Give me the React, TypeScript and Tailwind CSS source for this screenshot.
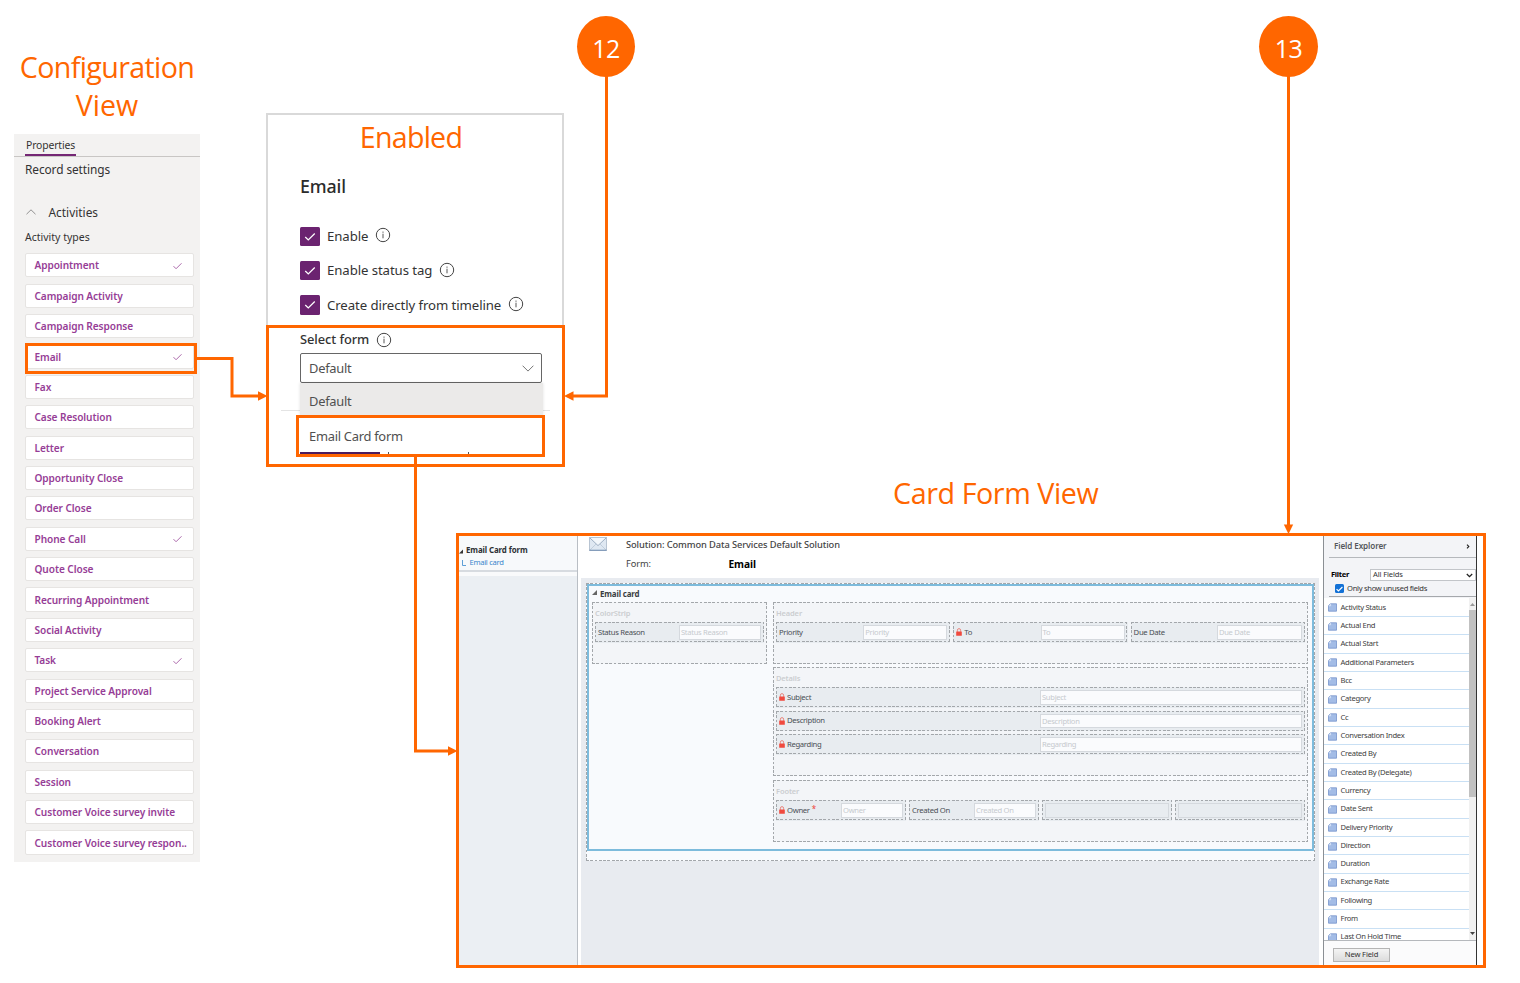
import type { ReactNode } from "react";

const activities: { name: string; checked?: boolean }[] = [
  { name: "Appointment", checked: true },
  { name: "Campaign Activity" },
  { name: "Campaign Response" },
  { name: "Email", checked: true },
  { name: "Fax" },
  { name: "Case Resolution" },
  { name: "Letter" },
  { name: "Opportunity Close" },
  { name: "Order Close" },
  { name: "Phone Call", checked: true },
  { name: "Quote Close" },
  { name: "Recurring Appointment" },
  { name: "Social Activity" },
  { name: "Task", checked: true },
  { name: "Project Service Approval" },
  { name: "Booking Alert" },
  { name: "Conversation" },
  { name: "Session" },
  { name: "Customer Voice survey invite" },
  { name: "Customer Voice survey respon.." },
];

const fields = [
  "Activity Status", "Actual End", "Actual Start", "Additional Parameters", "Bcc", "Category", "Cc",
  "Conversation Index", "Created By", "Created By (Delegate)", "Currency", "Date Sent", "Delivery Priority",
  "Direction", "Duration", "Exchange Rate", "Following", "From", "Last On Hold Time",
];

const dashed =
  "bg-no-repeat [background-image:repeating-linear-gradient(90deg,#a3a7ab_0_2.7px,transparent_2.7px_4.3px),repeating-linear-gradient(90deg,#a3a7ab_0_2.7px,transparent_2.7px_4.3px),repeating-linear-gradient(180deg,#a3a7ab_0_2.7px,transparent_2.7px_4.3px),repeating-linear-gradient(180deg,#a3a7ab_0_2.7px,transparent_2.7px_4.3px)] [background-size:100%_1.4px,100%_1.4px,1.4px_100%,1.4px_100%] [background-position:top,bottom,left,right]";

function Check({ className }: { className: string }) {
  return (
    <svg viewBox="0 0 12 10" className={className} fill="none" stroke="currentColor">
      <path d="M1 5.2 4.2 8.4 11 1.6" />
    </svg>
  );
}

function Info() {
  return (
    <svg viewBox="0 0 16 16" className="size-[16px] shrink-0 text-[#444]" fill="none" stroke="currentColor">
      <circle cx="8" cy="8" r="6.7" strokeWidth="1" />
      <path d="M8 6.7V11.3" strokeWidth="0.9" />
      <path d="M8 4.6V5.7" strokeWidth="1" />
    </svg>
  );
}

function Lock() {
  return (
    <svg viewBox="0 0 6 8" className="mr-[2px] h-[8px] w-[6px] shrink-0">
      <path d="M1.4 3.8V2.2a1.6 1.6 0 0 1 3.2 0V3.8" fill="none" stroke="#e9877f" strokeWidth="1" />
      <rect x="0.2" y="3.4" width="5.6" height="4.4" rx="0.4" fill="#f04a3e" />
    </svg>
  );
}

function ConfigurationView() {
  return (
    <aside className="absolute left-[14px] top-[48px] w-[186px]">
      <h2 className="text-center font-['Open_Sans'] text-[28.6px] leading-[38px] text-[#ff6600]">
        <span className="tracking-[-0.62px]">Configuration</span>
        <br />
        View
      </h2>
      <div className="mt-[10px] h-[728px] bg-[#f3f2f1] text-[#333]">
        <div className="flex h-[23px] items-end border-b border-[#c8c6c4] pl-[11px]">
          <div className="h-[22px] w-[51px] border-b-2 border-[#742774] pl-px text-[10.4px] leading-[22px] tracking-[-0.15px]">Properties</div>
        </div>
        <div className="pl-[11px] text-[11.9px] leading-[24px] tracking-[-0.1px]">Record settings</div>
        <div className="mt-[20px] flex h-[22px] items-center pl-[12px] text-[11.9px]">
          <svg viewBox="0 0 10 6" className="h-[6px] w-[10px]" fill="none" stroke="#777" strokeWidth="0.8">
            <path d="M0.5 5.2 5 0.8 9.5 5.2" />
          </svg>
          <span className="ml-[12.5px] pt-px">Activities</span>
        </div>
        <div className="mt-[3px] h-[22px] pl-[11px] text-[10.5px] leading-[22px]">Activity types</div>
        <ul className="mt-[5.3px] flex flex-col gap-[6.3px] pl-[10.5px]">
          {activities.map((a) => (
            <li
              key={a.name}
              className="flex h-[24.08px] w-[169px] items-center justify-between rounded-[2px] border border-[#e6e4e2] bg-white pl-[9px] pr-[10px] text-[10.1px] font-semibold text-[#963d96]"
            >
              <span className="whitespace-nowrap pt-[1.4px] tracking-[-0.07px]">{a.name}</span>
              {a.checked && <Check className="mt-px h-[8px] w-[11px] text-[#a055a0] stroke-[1.1]" />}
            </li>
          ))}
        </ul>
      </div>
    </aside>
  );
}

function Option({ children }: { children: ReactNode }) {
  return (
    <div className="flex h-[34.3px] items-center">
      <div className="grid h-[19.5px] w-[19.5px] place-items-center rounded-[1.5px] bg-[#6b2370]">
        <Check className="h-[9.5px] w-[12px] text-white stroke-[1.3]" />
      </div>
      <span className="ml-[7.5px] mr-[7px] pt-px">{children}</span>
      <div className="-mt-[2px]">
        <Info />
      </div>
    </div>
  );
}

function EnabledPanel() {
  return (
    <section className="absolute left-[266px] top-[113px] h-[353px] w-[298px] border-2 border-[#d9d9d9] bg-white px-[32px] text-[13.2px] tracking-[-0.08px] text-[#333]">
      <h2 className="pr-[8px] pt-[3px] text-center font-['Open_Sans'] text-[28.6px] leading-[38px] tracking-[-0.75px] text-[#ff6600]">Enabled</h2>
      <h3 className="mt-[17px] text-[17.8px] font-medium leading-[26px] tracking-[-0.1px] text-[#2b2b2b]">Email</h3>
      <div className="mt-[20.3px]">
        <Option>Enable</Option>
        <Option>Enable status tag</Option>
        <Option>Create directly from timeline</Option>
      </div>
      <div className="flex h-[31.5px] items-center gap-[7px] pt-[4px] text-[12.9px] font-medium">
        Select form <Info />
      </div>
      <div className="-mt-[0.6px] text-[12.9px] tracking-[-0.27px] text-[#505050]">
        <div className="flex h-[30px] w-[242px] items-center justify-between rounded-[2px] border border-[#666] pl-[8px] pr-[7px]">
          <span className="pt-[2px]">Default</span>
          <svg viewBox="0 0 12 7" className="h-[7px] w-[12px]" fill="none" stroke="#666" strokeWidth="0.9">
            <path d="M0.6 0.7 6 6.1 11.4 0.7" />
          </svg>
        </div>
        <div className="-mx-[19px] h-[32px] w-[269px] bg-[linear-gradient(#e4e4e4,#e4e4e4)] bg-[length:100%_1px] bg-[position:0_27px] bg-no-repeat px-[19px]">
          <div className="h-full w-[243px] bg-[#ebeae9] pl-[9px] pt-px leading-[35px] shadow-[0_0_3px_rgba(0,0,0,0.12)]">Default</div>
        </div>
        <div className="relative -ml-[4px] h-[42px] w-[249px] border-[3px] border-[#ff6600] bg-white pl-[10px] leading-[37px]">
          Email Card form
          <div className="absolute bottom-0 left-[1px] flex h-[2px] w-[240px] items-end gap-[8px]">
            <i className="h-[2px] w-[80px] bg-[#4b1a5c]" />
            <i className="h-[2px] flex-1 border-l border-[#555]" />
            <i className="h-[2px] w-[72px] border-l border-[#555]" />
          </div>
        </div>
      </div>
    </section>
  );
}

function FieldInput({ className, children }: { className: string; children?: ReactNode }) {
  return (
    <div
      className={
        "h-[14.5px] shrink-0 overflow-hidden whitespace-nowrap border border-[#d5d9de] pl-[1px] text-[7.6px] leading-[12px] tracking-[-0.3px] text-[#c6cace] " + className
      }
    >
      {children}
    </div>
  );
}

function Cell({ label, input, className, locked, required }: { label: string; input: string; className: string; locked?: boolean; required?: boolean }) {
  return (
    <div className={"flex h-[20.5px] items-center bg-[#e8ecf0] pl-[3px] pr-[3px] " + dashed + " " + className}>
      {locked && <Lock />}
      <span className="pt-px text-[7.7px] tracking-[-0.33px] text-[#4a4f55]">{label}</span>
      {required && <span className="-mt-[2px] ml-[2px] text-[8px] leading-none text-[#ee4338]">*</span>}
      <FieldInput className={"ml-auto bg-[#fafbfd] " + input}>{label}</FieldInput>
    </div>
  );
}

function Section({ title, className, children }: { title: string; className: string; children: ReactNode }) {
  return (
    <div className={"bg-[#f3f5f8] pl-[3px] pt-[5px] " + dashed + " " + className}>
      <div className="h-[15px] text-[7.5px] font-semibold leading-[13px] tracking-[-0.13px] text-[#cbcdd0]">{title}</div>
      {children}
    </div>
  );
}

function FormCanvas() {
  return (
    <div className="flex h-full w-[744px] flex-col border-l border-[#b9bec4] bg-white pl-[3px]">
      <header className="flex h-[42px]">
        <svg viewBox="0 0 18 14" className="ml-[8px] mt-[1px] h-[14px] w-[18px]">
          <rect x="0.5" y="0.5" width="17" height="13" fill="#dfe8f2" stroke="#b8c4d2" />
          <path d="M1 13 7 7M17 13 11 7" stroke="#b9c6d5" strokeWidth="0.8" />
          <path d="M1 1 9 8.6 17 1" fill="#f3f7fb" stroke="#9fb0c4" strokeWidth="1" />
          <path d="M0.5 13.3h17" stroke="#7f99b8" strokeWidth="1.2" />
        </svg>
        <div className="ml-[19px] text-[9.3px] leading-[18.5px] tracking-[-0.1px] text-[#444]">
          <div className="font-medium">Solution: Common Data Services Default Solution</div>
          <div className="flex">
            <span className="w-[102.5px]">Form:</span>
            <b className="text-[10.2px] text-black">Email</b>
          </div>
        </div>
      </header>
      <div className="mr-[2px] flex-1 bg-[#e8ebf0] pl-[5px] pt-[5px]">
        <div className={"h-[278px] w-[729px] bg-[#f8fafd] px-px pt-px " + dashed}>
          <div className="h-[267px] border-2 border-[#7dbbdc] pl-[3px]">
            <div className="flex h-[16px] items-center pt-px text-[7.9px] font-bold tracking-[-0.13px] text-[#3a3d41]">
              <svg viewBox="0 0 5 5" className="-mt-[5px] mr-[3px] size-[5px]">
                <path d="M5 0V5H0Z" fill="#666" />
              </svg>
              Email card
            </div>
            <div className="flex gap-[6px]">
              <Section title="ColorStrip" className="h-[62px] w-[175px]">
                <Cell label="Status Reason" className="w-[169px]" input="w-[82px]" />
              </Section>
              <div className="w-[535px]">
                <Section title="Header" className="h-[62px]">
                  <div className="flex gap-[3px]">
                    <Cell label="Priority" className="w-[174.3px]" input="w-[84px]" />
                    <Cell label="To" locked className="w-[174.3px]" input="w-[84px]" />
                    <Cell label="Due Date" className="w-[174.4px]" input="w-[85px]" />
                  </div>
                </Section>
                <Section title="Details" className="mt-[3px] h-[109px]">
                  <div className="flex flex-col gap-[3px]">
                    <Cell label="Subject" locked className="w-[529px]" input="w-[262px]" />
                    <Cell label="Description" locked className="w-[529px]" input="w-[262px]" />
                    <Cell label="Regarding" locked className="w-[529px]" input="w-[262px]" />
                  </div>
                </Section>
                <Section title="Footer" className="mt-[4px] h-[62px]">
                  <div className="flex gap-[3px]">
                    <Cell label="Owner" locked required className="w-[130px]" input="w-[62px]" />
                    <Cell label="Created On" className="w-[130px]" input="w-[62px]" />
                    <div className={"flex h-[20.5px] w-[130px] items-center bg-[#e8ecf0] px-[3px] " + dashed}>
                      <FieldInput className="w-full" />
                    </div>
                    <div className={"flex h-[20.5px] w-[130px] items-center bg-[#e8ecf0] px-[3px] " + dashed}>
                      <FieldInput className="w-full" />
                    </div>
                  </div>
                </Section>
              </div>
            </div>
          </div>
        </div>
      </div>
    </div>
  );
}

function FieldExplorer() {
  return (
    <div className="flex h-full w-[154px] flex-col border-l border-r border-l-[#8b8f94] border-r-[#333] bg-[#f3f4f7] text-[7.6px] tracking-[-0.3px] text-[#333]">
      <div className="ml-[5px] flex h-[22px] items-center justify-between border-b border-[#b5b8bc] pl-[5px] pr-[6px] text-[8.1px] font-semibold tracking-[-0.1px] text-[#55585c]">
        Field Explorer
        <svg viewBox="0 0 4 6" className="h-[5px] w-[4px]" fill="none" stroke="#222" strokeWidth="1.3">
          <path d="M0.8 0.8 3 3 0.8 5.2" />
        </svg>
      </div>
      <div className="mt-[11px] flex h-[12px] items-center pl-[7px]">
        <b className="w-[39px] text-[7.6px] text-black">Filter</b>
        <div className="flex h-[12px] flex-1 items-center justify-between border border-[#c2c5c9] bg-white pl-[2px] pr-[2px] tracking-[-0.15px]">
          All Fields
          <svg viewBox="0 0 7 5" className="h-[5px] w-[7px]" fill="none" stroke="#222" strokeWidth="1.3">
            <path d="M0.8 1 3.5 3.7 6.2 1" />
          </svg>
        </div>
      </div>
      <div className="ml-[5px] flex h-[16px] items-center border-b border-[#a5a8ac] pl-[6px]">
        <div className="mr-[3px] grid size-[9px] place-items-center rounded-[1.5px] bg-[#1371d6]">
          <Check className="h-[6px] w-[7px] text-white stroke-[2]" />
        </div>
        Only show unused fields
      </div>
      <div className="mt-px flex h-[343px] overflow-hidden border-b border-[#b5b8bc] bg-white">
        <ul className="w-[145px] pt-[0.6px]">
          {fields.map((f) => (
            <li key={f} className="flex h-[18.33px] items-center border-b border-[#c9e0f4] pl-[4px] text-[#404040]">
              <svg viewBox="0 0 9 9" className="mr-[3.5px] mt-px size-[9px]">
                <path d="M2.4 0.8H8.5V8.2H0.5V2.7Z" fill="#a3bce6" stroke="#7694cb" strokeWidth="0.8" />
                <path d="M2.6 1V2.8H0.8" fill="none" stroke="#e3ecfa" strokeWidth="0.8" />
              </svg>
              {f}
            </li>
          ))}
        </ul>
        <div className="flex flex-1 flex-col items-center justify-between bg-[#f1f1f1] py-[5px]">
          <svg viewBox="0 0 5 3" className="h-[3px] w-[5px] shrink-0"><path d="M0 3 2.5 0 5 3Z" fill="#999" /></svg>
          <div className="mb-auto mt-[4px] h-[187px] w-[7px] bg-[#c1c1c1]" />
          <svg viewBox="0 0 5 3" className="h-[3px] w-[5px] shrink-0"><path d="M0 0 2.5 3 5 0Z" fill="#444" /></svg>
        </div>
      </div>
      <div className="flex-1 bg-[#fbfbfc] pl-[9px] pt-[7px]">
        <div className="grid h-[14px] w-[57px] place-items-center border border-[#b4b4b4] bg-gradient-to-b from-[#f4f4f4] to-[#dcdcdc] leading-none tracking-[-0.15px]">
          New Field
        </div>
      </div>
    </div>
  );
}

function CardFormView() {
  return (
    <section className="absolute left-[456px] top-[474px] w-[1030px]">
      <h2 className="h-[59px] pl-[50px] font-['Open_Sans'] text-[28.7px] leading-[38px] text-[#ff6600]">
        <span className="ml-[387px] tracking-[-0.42px]">Card Form View</span>
      </h2>
      <div className="flex h-[435px] border-[3px] border-[#ff6600] bg-white">
        <nav className="flex w-[118px] flex-col bg-[#ebeff3]">
          <div className="h-[36px] border-b-2 border-[#d7dbe0] bg-[#f7f9fb] pt-[8px]">
            <div className="flex h-[13px] items-center pt-px text-[7.9px] font-bold tracking-[-0.1px] text-[#2d3034]">
              <svg viewBox="0 0 5 5" className="mr-[3px] h-[5px] w-[4px]"><path d="M5 0V5H0Z" fill="#333" /></svg>
              Email Card form
            </div>
            <div className="flex h-[12px] items-center pl-[2.5px] text-[7.6px] tracking-[-0.3px] text-[#3a86cc]">
              <svg viewBox="0 0 4 6" className="mr-[4px] h-[6px] w-[4px]" fill="none" stroke="#4c93d1" strokeWidth="0.9"><path d="M0.5 0V5.5H4" /></svg>
              Email card
            </div>
          </div>
          <div className="h-[4px] bg-[#f9fafb]" />
        </nav>
        <FormCanvas />
        <div className="w-[2px] bg-white" />
        <FieldExplorer />
      </div>
    </section>
  );
}

function Badge({ className, children }: { className: string; children: string }) {
  return (
    <div className={"absolute top-[16px] grid h-[61px] place-items-center rounded-[50%] bg-[#ff6600] pt-[3px] font-['Open_Sans'] text-[25px] font-medium leading-none tracking-[-0.6px] text-white " + className}>
      {children}
    </div>
  );
}

export default function App() {
  return (
    <main className="relative h-[983px] w-[1520px] overflow-hidden bg-white font-['Noto_Sans',sans-serif]">
      <ConfigurationView />
      <EnabledPanel />
      <CardFormView />
      <div className="absolute left-[25px] top-[343px] h-[31px] w-[172px] border-[3px] border-[#ff6600]" />
      <div className="absolute left-[266px] top-[325px] h-[142px] w-[299px] border-[3px] border-[#ff6600]" />
      <svg viewBox="0 0 1520 983" className="absolute inset-0 h-full w-full" fill="none" stroke="#ff6600" strokeWidth="3">
        <path d="M197 358.5H232V396H260" />
        <path d="M606.5 76V396H572" />
        <path d="M415.5 457V751H450" />
        <path d="M1288.5 76V526" />
        <g fill="#ff6600" stroke="none">
          <path d="M258 391.3 267.5 396 258 400.7Z" />
          <path d="M573.5 391.3 564 396 573.5 400.7Z" />
          <path d="M448 746.3 457.5 751 448 755.7Z" />
          <path d="M1283.8 524.5H1293.2L1288.5 534Z" />
        </g>
      </svg>
      <Badge className="left-[577px] w-[58px]">12</Badge>
      <Badge className="left-[1259px] w-[59px]">13</Badge>
    </main>
  );
}
